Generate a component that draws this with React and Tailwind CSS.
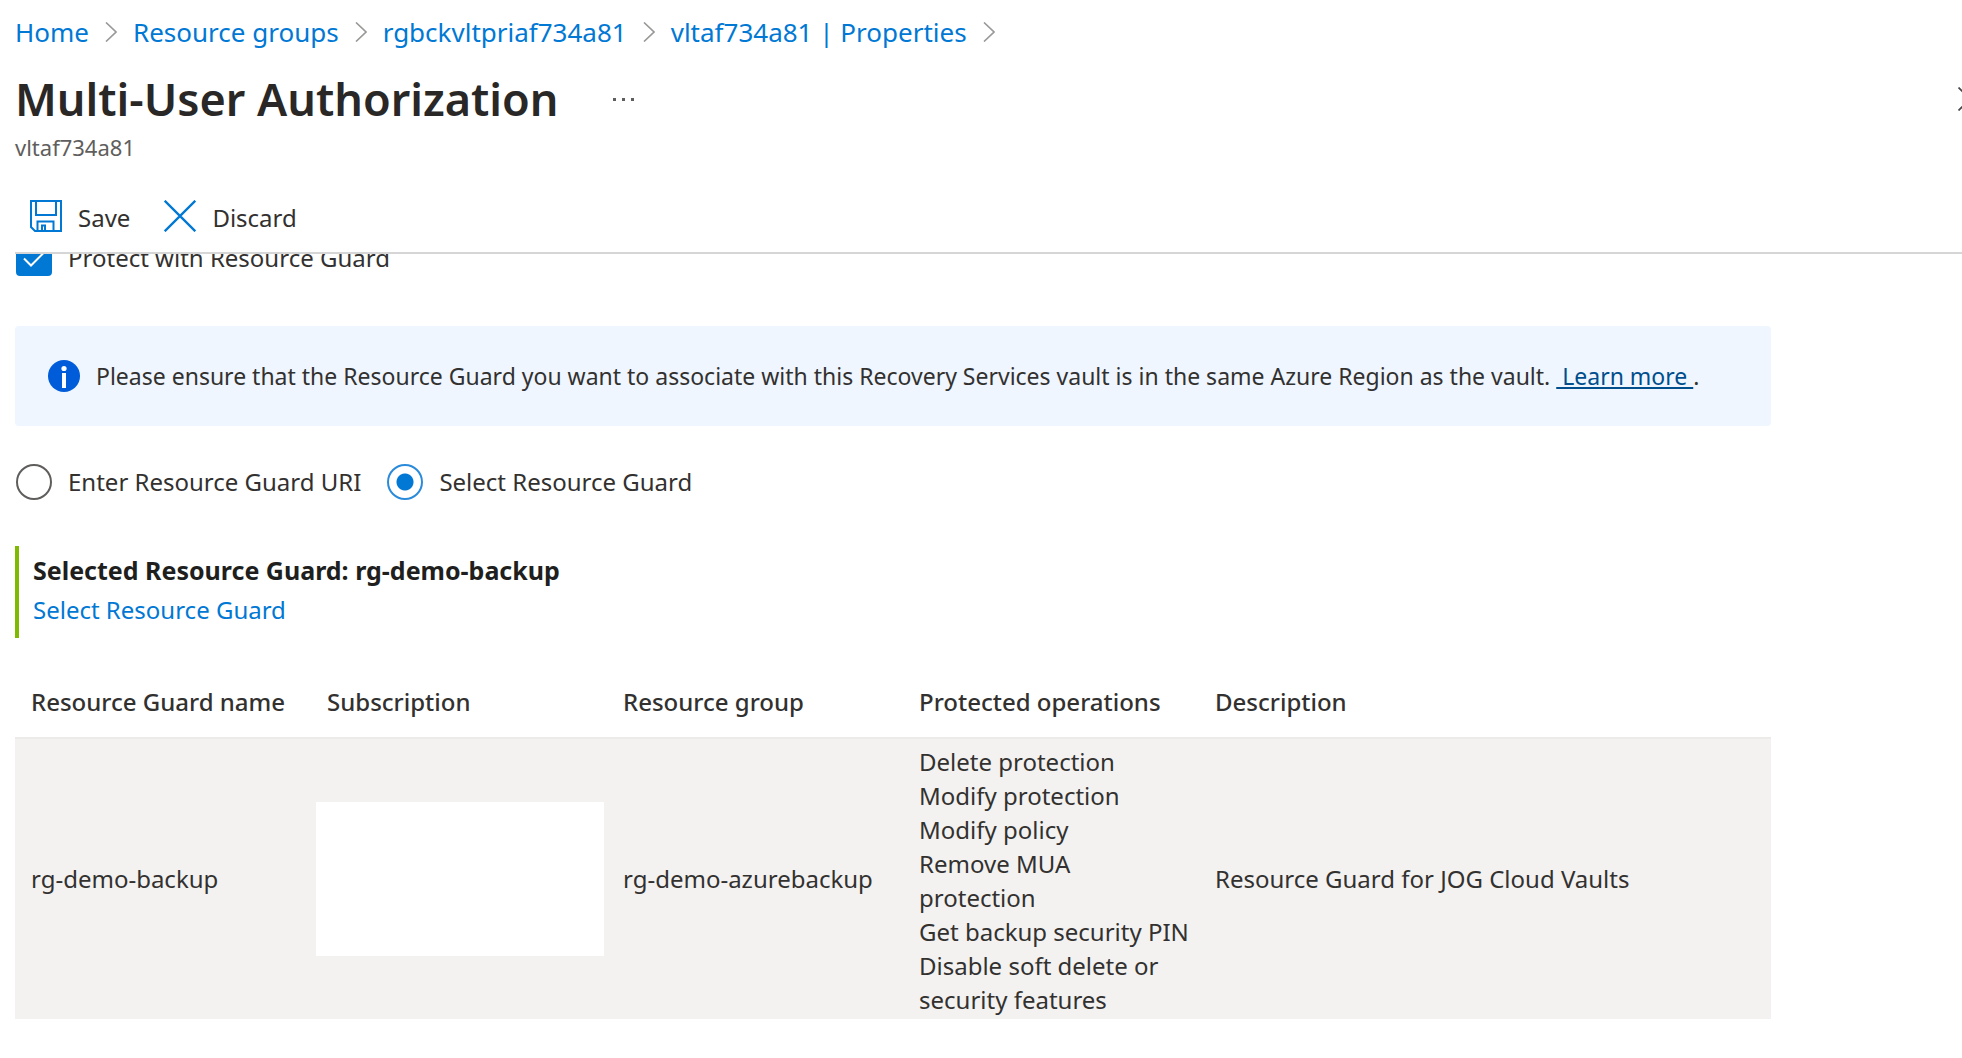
import { useState } from "react";

const crumbs = ["Home", "Resource groups", "rgbckvltpriaf734a81", "vltaf734a81 | Properties"];

const columns = [
  "Resource Guard name",
  "Subscription",
  "Resource group",
  "Protected operations",
  "Description",
];

const operations = [
  "Delete protection",
  "Modify protection",
  "Modify policy",
  "Remove MUA protection",
  "Get backup security PIN",
  "Disable soft delete or security features",
];

function Chevron() {
  return (
    <svg aria-hidden="true" className="mx-4 h-5 w-3 shrink-0" viewBox="0 0 12 20" fill="none" stroke="#9a9896" strokeWidth="1.6">
      <path d="M1 0.5 11 10 1 19.5" />
    </svg>
  );
}

function SaveIcon() {
  return (
    <svg aria-hidden="true" className="size-8" viewBox="0 0 32 32" fill="none" stroke="#0078d4" strokeWidth="2">
      <path d="M1 1h30v30H5l-4-4z" />
      <path d="M6 1v14h20V1" />
      <path d="M7.5 31V21.5h16V31" />
      <path d="M12 31v-5.500h3V31" strokeWidth="2" />
    </svg>
  );
}

function CrossIcon({ className }) {
  return (
    <svg aria-hidden="true" className={className} viewBox="0 0 32 32" fill="none" stroke="currentColor" strokeWidth="2.300">
      <path d="M0.700 0.700 31.300 31.300M31.300 0.700 0.700 31.300" />
    </svg>
  );
}

function InfoIcon() {
  return (
    <svg aria-hidden="true" className="size-8 shrink-0" viewBox="0 0 32 32">
      <circle cx="16" cy="16" r="16" fill="#015cda" />
      <circle cx="16" cy="8.500" r="2.600" fill="#fff" />
      <rect x="14" y="13" width="4" height="15" fill="#fff" />
    </svg>
  );
}

function Radio({ id, label, checked, onChange }) {
  return (
    <div className="flex items-center gap-4">
      <input
        type="radio"
        id={id}
        name="guard-source"
        checked={checked}
        onChange={onChange}
        className="size-9 appearance-none rounded-full border-2 border-[#605e5c] bg-white checked:border-[#2b8bdb] checked:bg-[radial-gradient(circle,#0078d4_8px,#ffffff_9px)]"
      />
      <label htmlFor={id}>{label}</label>
    </div>
  );
}

export default function App() {
  const [isProtected, setProtected] = useState(true);
  const [source, setSource] = useState("select");

  return (
    <div className="overflow-hidden bg-white pl-[15px] font-['Noto_Sans',sans-serif] text-[24px] leading-9 text-[#323130]">
      <header>
        <nav aria-label="Breadcrumb" className="pt-3.5">
          <ol className="flex items-center text-[26px] text-[#0078d4]">
            {crumbs.map((c) => (
              <li key={c} className="flex items-center whitespace-nowrap">
                <a href="#">{c}</a>
                <Chevron />
              </li>
            ))}
          </ol>
        </nav>
        <div className="mt-[21px] flex items-center">
          <h1 className="text-[45px] leading-[56px] font-semibold text-[#292827]">Multi-User Authorization</h1>
          <button type="button" aria-label="More options" className="ml-[54px] flex gap-1.5">
            <span className="size-[3px] bg-[#605e5c]" />
            <span className="size-[3px] bg-[#605e5c]" />
            <span className="size-[3px] bg-[#605e5c]" />
          </button>
          <button type="button" aria-label="Close" className="-mr-5 ml-auto text-[#484644]">
            <CrossIcon className="size-6" />
          </button>
        </div>
        <p className="mt-1.5 text-[22px] leading-7 text-[#605e5c]">vltaf734a81</p>
        <div className="mt-[19px] flex h-[74px] items-center gap-[34px] border-b-2 border-[#d6d6d6] pl-[15px]">
          <button type="button" className="flex items-center gap-4">
            <SaveIcon />
            <span className="pt-1">Save</span>
          </button>
          <button type="button" className="flex items-center gap-4">
            <CrossIcon className="size-8 text-[#0078d4]" />
            <span className="pt-1">Discard</span>
          </button>
        </div>
      </header>

      <main className="overflow-hidden">
        <div className="-mt-3.5 flex items-center gap-4 pl-px">
          <span className="relative flex">
            <input
              type="checkbox"
              id="protect"
              checked={isProtected}
              onChange={(e) => setProtected(e.target.checked)}
              className="peer size-9 appearance-none rounded border-2 border-[#605e5c] checked:border-[#0078d4] checked:bg-[#0078d4]"
            />
            <svg aria-hidden="true" className="pointer-events-none absolute inset-0 hidden size-9 peer-checked:block" viewBox="0 0 36 36" fill="none" stroke="#fff" strokeWidth="2">
              <path d="M8 18.500 15 25.500 29 11.500" />
            </svg>
          </span>
          <label htmlFor="protect">Protect with Resource Guard</label>
        </div>

        <div className="mt-[50px] flex min-h-[100px] max-w-[1756px] items-center gap-4 rounded bg-[#eff6ff] px-[33px] text-[23px]">
          <InfoIcon />
          <p>
            Please ensure that the Resource Guard you want to associate with this Recovery Services vault is in the same Azure Region as the vault.{" "}
            <a href="#" className="whitespace-pre text-[#004e8c] underline decoration-2 underline-offset-2">{" Learn more "}</a>.
          </p>
        </div>

        <div className="mt-[38px] flex items-center gap-[26px] pl-px">
          <Radio id="enter-uri" label="Enter Resource Guard URI" checked={source === "uri"} onChange={() => setSource("uri")} />
          <Radio id="select-guard" label="Select Resource Guard" checked={source === "select"} onChange={() => setSource("select")} />
        </div>

        <section className="mt-[46px] border-l-4 border-[#7fba00] pt-1 pb-2 pl-3.5 leading-10">
          <h2 className="text-[25px] font-bold text-[#201f1e]">Selected Resource Guard: rg-demo-backup</h2>
          <a href="#" className="block text-[#0078d4]">Select Resource Guard</a>
        </section>

        <table className="mt-7 w-full max-w-[1756px] table-fixed text-left">
          <thead>
            <tr className="h-[72px] border-b-2 border-[#edebe9]">
              {columns.map((c, i) => (
                <th key={c} scope="col" className={i < 4 ? "w-[296px] pl-4 font-medium" : "pl-4 font-medium"}>
                  {c}
                </th>
              ))}
            </tr>
          </thead>
          <tbody>
            <tr className="bg-[#f3f2f1]">
              <td className="pl-4">rg-demo-backup</td>
              <td className="pr-[3px] pl-[5px]">
                <div className="h-[154px] bg-white" />
              </td>
              <td className="pl-4">rg-demo-azurebackup</td>
              <td className="pt-1.5 pr-2 pb-0.5 pl-4">
                <ul className="leading-[34px]">
                  {operations.map((o) => (
                    <li key={o}>{o}</li>
                  ))}
                </ul>
              </td>
              <td className="pl-4">Resource Guard for JOG Cloud Vaults</td>
            </tr>
          </tbody>
        </table>
      </main>
    </div>
  );
}
